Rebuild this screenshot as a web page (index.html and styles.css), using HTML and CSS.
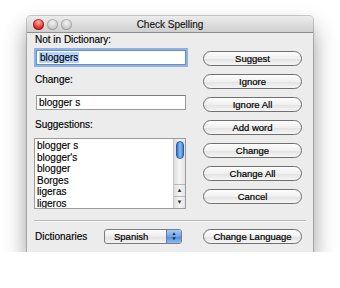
FILE: index.html
```html
<!DOCTYPE html>
<html lang="en">
<head>
    <meta charset="UTF-8">
    <title>Check Spelling</title>
    <link rel="stylesheet" href="styles.css">
</head>
<body>
<div class="window">
    <div class="titlebar">
        <div class="lights">
            <span class="light red"></span>
            <span class="light"></span>
            <span class="light"></span>
        </div>
        <span class="title">Check Spelling</span>
    </div>
    <div class="content">
        <div class="main">
            <div class="left">
                <p class="label">Not in Dictionary:</p>
                <div class="field focus"><span class="sel">bloggers</span></div>
                <p class="label gap">Change:</p>
                <div class="field field2">blogger s</div>
                <p class="label gap">Suggestions:</p>
                <div class="list">
                    <ul class="items">
                        <li>blogger s</li>
                        <li>blogger's</li>
                        <li>blogger</li>
                        <li>Borges</li>
                        <li>ligeras</li>
                        <li>ligeros</li>
                    </ul>
                    <div class="scroll">
                        <div class="thumb"></div>
                        <div class="arrows">
                            <span class="arr">&#9650;</span>
                            <span class="arr">&#9660;</span>
                        </div>
                    </div>
                </div>
            </div>
            <div class="btns">
                <button>Suggest</button>
                <button>Ignore</button>
                <button>Ignore All</button>
                <button>Add word</button>
                <button>Change</button>
                <button>Change All</button>
                <button>Cancel</button>
            </div>
        </div>
        <div class="sep"></div>
        <div class="bottom">
            <p class="label dict">Dictionaries</p>
            <div class="popup">
                <span class="popup-text">Spanish</span>
                <span class="popup-arrows">&#9650;<br>&#9660;</span>
            </div>
            <button class="lang">Change Language</button>
        </div>
    </div>
</div>
</body>
</html>
```

FILE: styles.css
```css
body {
    margin: 0;
    background: #fff;
    font-family: "Liberation Sans", Arial, sans-serif;
    font-size: 10px;
    color: #000;
    -webkit-text-stroke: 0.15px #000;
}
.window {
    width: 286px;
    margin: 16px 0 0 27px;
    background: #ececec;
    border-radius: 4px 4px 0 0;
    box-shadow: 0 0 0 1px rgba(0,0,0,0.2), 0 12px 22px rgba(0,0,0,0.42);
}
.titlebar {
    height: 16px;
    display: flex;
    align-items: center;
    justify-content: center;
    position: relative;
    background: linear-gradient(to bottom, #ececec, #cfcfcf);
    border-bottom: 1px solid #8e8e8e;
    border-radius: 4px 4px 0 0;
}
.lights {
    position: absolute;
    left: 6px;
    top: 3px;
    display: flex;
    gap: 3px;
}
.light {
    width: 11px;
    height: 11px;
    border-radius: 50%;
    background: radial-gradient(circle at 50% 35%, #f4f4f4, #c4c4c4 70%, #a9a9a9);
    box-shadow: inset 0 0 0 1px rgba(0,0,0,0.18);
}
.light.red {
    background: radial-gradient(circle at 50% 30%, #ffb0a8, #e5352c 55%, #a5120d);
    box-shadow: inset 0 0 0 1px rgba(90,0,0,0.4);
}
.title {
    font-size: 10px;
    color: #222;
}
.content {
    padding: 1px 11px 8px 7px;
}
.main {
    display: flex;
    gap: 17px;
}
.left {
    width: 152px;
}
.label {
    margin: 0;
    height: 12px;
    line-height: 12px;
    padding-left: 1px;
}
.label.gap {
    margin-top: 9px;
}
.field {
    margin: 4px 0 0 2px;
    width: 146px;
    height: 13px;
    line-height: 13px;
    padding: 0 0 0 2px;
    background: #fff;
    border: 1px solid #9a9a9a;
    border-top-color: #7b7b7b;
}
.field.focus {
    border-color: #6d8fbf;
    box-shadow: 0 0 0 2px #8db2e3;
}
.field2 {
    margin-top: 9px;
}
.sel {
    background: #b5d5ff;
    padding: 0 1px;
}
.list {
    margin-top: 7px;
    height: 69px;
    display: flex;
    background: #fff;
    border: 1px solid #9a9a9a;
}
.items {
    flex: 1;
    list-style: none;
    margin: 0;
    padding: 1px 0 0 2px;
    overflow: hidden;
}
.items li {
    height: 11.5px;
    line-height: 11.5px;
}
.scroll {
    width: 11px;
    display: flex;
    flex-direction: column;
    justify-content: space-between;
    background: linear-gradient(to right, #dcdcdc, #f6f6f6 50%, #e4e4e4);
    border-left: 1px solid #c8c8c8;
}
.thumb {
    margin: 2px 1px 0 2px;
    height: 16px;
    border-radius: 5px;
    background: linear-gradient(to right, #2f6fd0, #8ec0f6 50%, #3e7fdc);
    border: 1px solid #2a5ea8;
}
.arrows {
    display: flex;
    flex-direction: column;
}
.arr {
    height: 11px;
    font-size: 6px;
    line-height: 11px;
    text-align: center;
    color: #333;
    -webkit-text-stroke: 0;
    border-top: 1px solid #b8b8b8;
}
.btns {
    width: 99px;
    padding-top: 17px;
    display: flex;
    flex-direction: column;
    gap: 8px;
}
button {
    height: 15px;
    padding: 0;
    font-family: "Liberation Sans", Arial, sans-serif;
    font-size: 9.5px;
    color: #000;
    -webkit-text-stroke: 0.2px #000;
    border: 1px solid #6f6f6f;
    border-radius: 8px;
    background: linear-gradient(to bottom, #fdfdfd, #f0f0f0 50%, #e2e2e2 51%, #f5f5f5);
}
.sep {
    margin-top: 11px;
    height: 1px;
    width: 272px;
    background: #b9b9b9;
    border-bottom: 1px solid #fafafa;
}
.bottom {
    margin-top: 7px;
    display: flex;
    align-items: center;
}
.dict {
    width: 69px;
}
.popup {
    width: 76px;
    height: 13px;
    display: flex;
    border: 1px solid #7d7d7d;
    border-radius: 3px;
    background: linear-gradient(to bottom, #fdfdfd, #ececec 50%, #e0e0e0 51%, #f3f3f3);
    overflow: hidden;
}
.popup-text {
    flex: 1;
    padding-left: 9px;
    line-height: 13px;
    font-size: 9.5px;
    -webkit-text-stroke: 0.2px #000;
}
.popup-arrows {
    width: 14px;
    font-size: 4.5px;
    line-height: 5px;
    padding-top: 1px;
    text-align: center;
    color: #123;
    border-left: 1px solid #5b7fb0;
    background: linear-gradient(to bottom, #a8cbf3, #6fa3e6 50%, #4f88d8 51%, #8cbef2);
}
.lang {
    width: 99px;
    margin-left: 21px;
}
```
